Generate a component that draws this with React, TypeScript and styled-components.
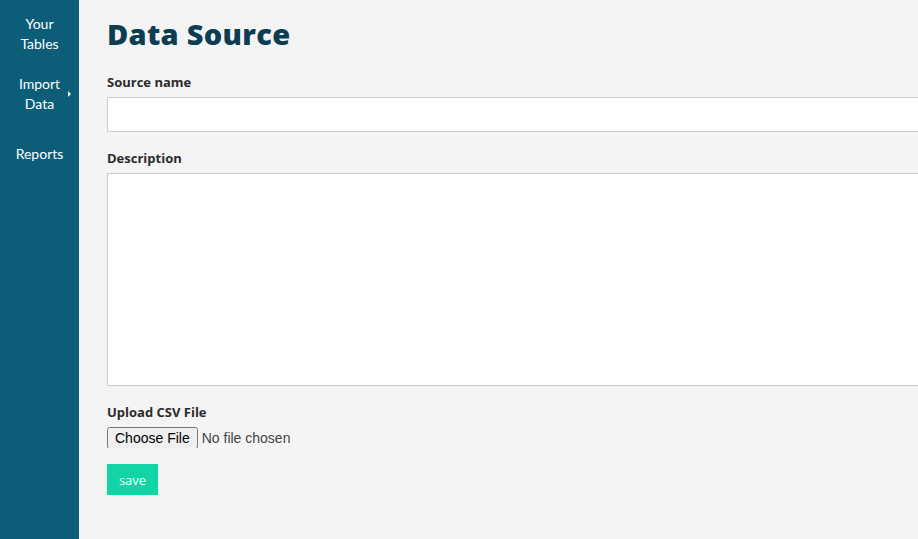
import styled, { createGlobalStyle } from 'styled-components';

const GlobalStyle = createGlobalStyle`
  html, body {
    margin: 0;
    padding: 0;
    background: #f4f4f4;
    overflow: hidden;
  }
  * {
    box-sizing: border-box;
  }
`;

const Layout = styled.div`
  display: flex;
  min-height: 100vh;
  font-family: Lato, 'Open Sans', sans-serif;
`;

const Sidebar = styled.nav`
  flex: 0 0 79px;
  background: #0b5d78;
  padding-top: 4px;
  display: flex;
  flex-direction: column;
`;

const NavItem = styled.a<{ $sub?: boolean }>`
  position: relative;
  display: block;
  padding: 10px 4px ${({ $sub }) => ($sub ? '20px' : '10px')};
  color: #ffffff;
  font-family: Lato, 'Open Sans', sans-serif;
  font-size: 14px;
  line-height: 20px;
  text-align: center;
  text-decoration: none;
  cursor: pointer;
`;

const SubArrow = styled.span`
  position: absolute;
  left: 68px;
  top: 27px;
  width: 0;
  height: 0;
  border-top: 3px solid transparent;
  border-bottom: 3px solid transparent;
  border-left: 3px solid #ffffff;
`;

const Main = styled.main`
  flex: 1;
  min-width: 0;
  padding: 14px 0 0 28px;
  overflow: hidden;
`;

const Title = styled.h1`
  margin: 0 0 20px;
  font-family: 'Open Sans', Lato, sans-serif;
  font-weight: 800;
  font-size: 29px;
  line-height: 40px;
  color: #0d3d52;
  letter-spacing: 0.3px;
`;

const Field = styled.div`
  display: flex;
  flex-direction: column;
  margin-bottom: 18px;
`;

const Label = styled.label`
  font-family: 'Open Sans', Lato, sans-serif;
  font-weight: 700;
  font-size: 13px;
  line-height: 16px;
  color: #2b2b2b;
  margin-bottom: 7px;
`;

const TextInput = styled.input`
  width: 1000px;
  height: 35px;
  border: 1px solid #cccccc;
  background: #ffffff;
  padding: 0 8px;
  outline: none;
`;

const TextArea = styled.textarea`
  width: 1000px;
  height: 213px;
  border: 1px solid #cccccc;
  background: #ffffff;
  resize: none;
  outline: none;
  display: block;
`;

const FileInput = styled.input`
  font-family: 'Liberation Sans', Arial, sans-serif;
  font-size: 14px;
  color: #444444;
  height: 21px;
`;

const SaveButton = styled.button`
  align-self: flex-start;
  width: 51px;
  height: 31px;
  margin-top: -2px;
  border: none;
  background: #12d5a5;
  color: #ffffff;
  font-family: 'Open Sans', Lato, sans-serif;
  font-size: 13px;
  cursor: pointer;
`;

const Form = styled.form`
  display: flex;
  flex-direction: column;
`;

export default function App() {
  return (
    <>
      <GlobalStyle />
      <Layout>
        <Sidebar>
          <NavItem>Your<br />Tables</NavItem>
          <NavItem $sub>
            Import<br />Data
            <SubArrow />
          </NavItem>
          <NavItem>Reports</NavItem>
        </Sidebar>
        <Main>
          <Title>Data Source</Title>
          <Form onSubmit={(e) => e.preventDefault()}>
            <Field>
              <Label>Source name</Label>
              <TextInput type="text" />
            </Field>
            <Field>
              <Label>Description</Label>
              <TextArea />
            </Field>
            <Field>
              <Label>Upload CSV File</Label>
              <FileInput type="file" accept=".csv" />
            </Field>
            <SaveButton type="submit">save</SaveButton>
          </Form>
        </Main>
      </Layout>
    </>
  );
}
